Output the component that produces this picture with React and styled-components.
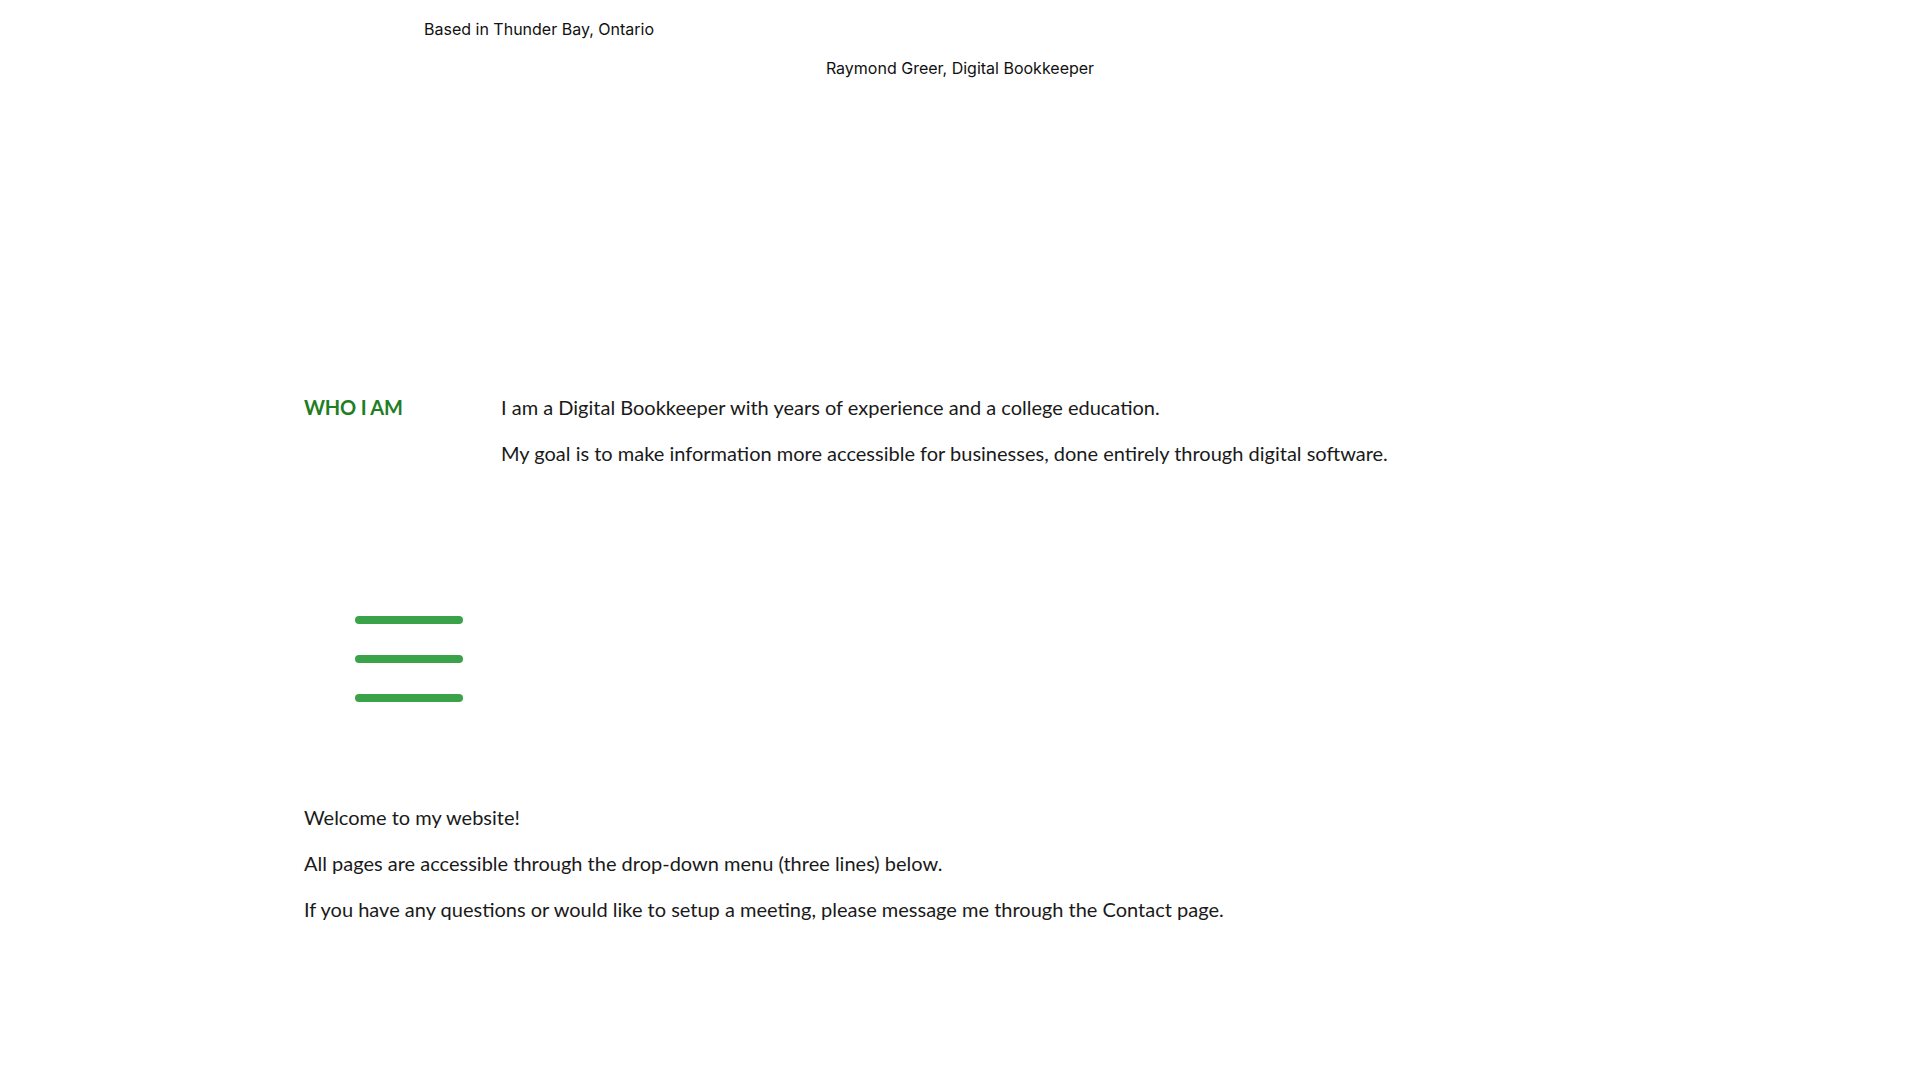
import React, { useState } from 'react'
import styled, { createGlobalStyle } from 'styled-components'

const GlobalStyle = createGlobalStyle`
    html, body {
        margin: 0;
        padding: 0;
        background: #ffffff;
    }
    body {
        font-family: Lato, "Open Sans", sans-serif;
        color: #1a1a1a;
    }
`

function App() {
    const [menuOpen, setMenuOpen] = useState(false);

    const toggleMenu = () => {
        setMenuOpen(!menuOpen);
    }

    return (
        <PageWrapper>
            <GlobalStyle />
            <Header>
                <Location>Based in Thunder Bay, Ontario</Location>
                <Title>Raymond Greer, Digital Bookkeeper</Title>
            </Header>

            <AboutRow>
                <Label>WHO I AM</Label>
                <AboutText>
                    <Paragraph>I am a Digital Bookkeeper with years of experience and a college education.</Paragraph>
                    <Paragraph>My goal is to make information more accessible for businesses, done entirely through digital software.</Paragraph>
                </AboutText>
            </AboutRow>

            <MenuButton aria-label="menu" onClick={toggleMenu} className={menuOpen ? "opened" : null}>
                <MenuLine />
                <MenuLine />
                <MenuLine />
            </MenuButton>

            <Welcome>
                <Paragraph>Welcome to my website!</Paragraph>
                <Paragraph>All pages are accessible through the drop-down menu (three lines) below.</Paragraph>
                <Paragraph>If you have any questions or would like to setup a meeting, please message me through the Contact page.</Paragraph>
            </Welcome>
        </PageWrapper>
    )
}

export default App

const PageWrapper = styled.div`
    width: 100%;
    min-height: 1080px;
    padding-bottom: 80px;
    box-sizing: border-box;
`

const Header = styled.header`
    padding-top: 19px;
    font-family: Inter, "Liberation Sans", sans-serif;
    font-size: 16px;
    line-height: 20px;
    color: #111;
`

const Location = styled.div`
    padding-left: 424px;
`

const Title = styled.div`
    margin-top: 19px;
    text-align: center;
`

const AboutRow = styled.section`
    display: flex;
    margin-top: 315px;
    padding-left: 304px;
`

const Label = styled.h2`
    width: 197px;
    flex-shrink: 0;
    margin: 0;
    font-family: Lato, sans-serif;
    font-size: 20px;
    font-weight: 700;
    line-height: 28px;
    letter-spacing: -0.2px;
    color: #1f7d24;
`

const AboutText = styled.div`
    display: flex;
    flex-direction: column;
    gap: 18px;
`

const Paragraph = styled.p`
    margin: 0;
    font-size: 20px;
    line-height: 28px;
    color: #1a1a1a;
`

const MenuButton = styled.button`
    display: flex;
    flex-direction: column;
    gap: 31px;
    margin: 149px 0 0 355px;
    padding: 0;
    border: none;
    background: none;
    cursor: pointer;
`

const MenuLine = styled.span`
    display: block;
    width: 108px;
    height: 8px;
    border-radius: 4px;
    background: #3aa34a;
`

const Welcome = styled.section`
    display: flex;
    flex-direction: column;
    gap: 18px;
    margin-top: 101px;
    padding-left: 304px;
`
